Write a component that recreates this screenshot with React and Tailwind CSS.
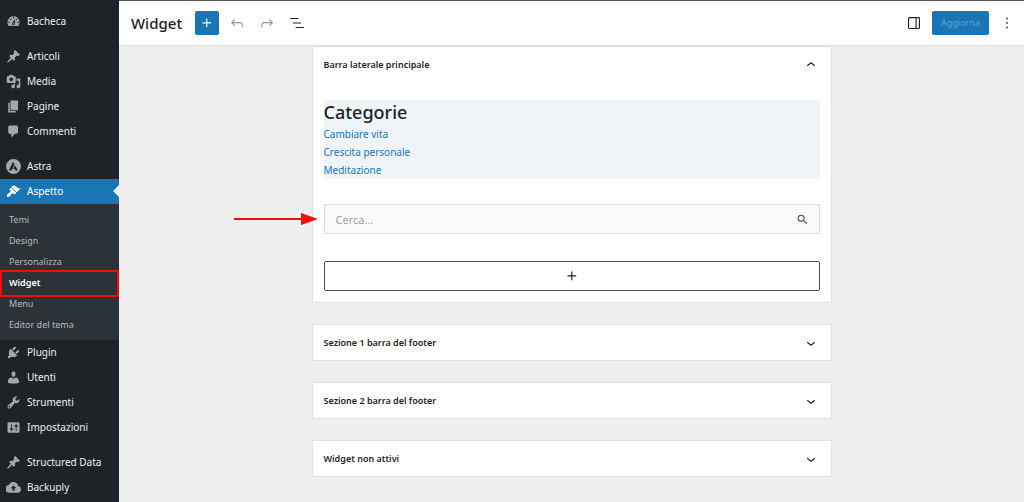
import React from 'react';

const ICONS = {
  dashboard:
    'M3.76 16h12.48A7.998 7.998 0 0 0 10 3a7.998 7.998 0 0 0-6.24 13zM10 4c.55 0 1 .45 1 1s-.45 1-1 1-1-.45-1-1 .45-1 1-1zM6 6c.55 0 1 .45 1 1s-.45 1-1 1-1-.45-1-1 .45-1 1-1zm8 0c.55 0 1 .45 1 1s-.45 1-1 1-1-.45-1-1 .45-1 1-1zm-5.37 5.55L12 7v6c0 1.1-.9 2-2 2s-2-.9-2-2c0-.57.24-1.08.63-1.45zM4 10c.55 0 1 .45 1 1s-.45 1-1 1-1-.45-1-1 .45-1 1-1zm12 0c.55 0 1 .45 1 1s-.45 1-1 1-1-.45-1-1 .45-1 1-1zm-5 3c0-.55-.45-1-1-1s-1 .45-1 1 .45 1 1 1 1-.45 1-1z',
  pin: 'M10.44 3.02l1.82-1.82 6.36 6.35-1.83 1.82c-1.05-.68-2.48-.57-3.41.36l-.75.75c-.92.93-1.04 2.35-.35 3.41l-1.83 1.82-2.41-2.41-2.8 2.79c-.42.42-3.38 2.71-3.8 2.29s1.86-3.39 2.28-3.81l2.79-2.79L4.1 9.36l1.83-1.82c1.05.69 2.48.57 3.4-.36l.75-.75c.93-.92 1.05-2.35.36-3.41z',
  media:
    'M13 11V4c0-.55-.45-1-1-1h-1.67L9 1H5L3.67 3H2c-.55 0-1 .45-1 1v7c0 .55.45 1 1 1h10c.55 0 1-.45 1-1zM7 4.5c1.38 0 2.5 1.12 2.5 2.5S8.38 9.5 7 9.5 4.5 8.38 4.5 7 5.62 4.5 7 4.5zM14 6h5v10.5c0 1.38-1.12 2.5-2.5 2.5S14 17.88 14 16.5s1.12-2.5 2.5-2.5c.17 0 .34.02.5.05V9h-3V6zm-4 8.05V13h2v3.5c0 1.38-1.12 2.5-2.5 2.5S7 17.88 7 16.5 8.12 14 9.5 14c.17 0 .34.02.5.05z',
  page: 'M6 15V2h10v13H6zm-1 1h8v2H3V5h2v11z',
  comment: 'M5 2h9c1.1 0 2 .9 2 2v7c0 1.1-.9 2-2 2h-2l-5 5v-5H5c-1.1 0-2-.9-2-2V4c0-1.1.9-2 2-2z',
  astra:
    'M10 0a10 10 0 1 0 0 20 10 10 0 0 0 0-20zM9.4 3.4l1.9 3.8-3.9 8.2H3.8zM11.9 8.4l3.9 7h-3.2l-.9-2H9.4z',
  brush:
    'M14.48 11.06L7.41 3.99l1.5-1.5c.5-.56 2.3-.47 3.51.32 1.21.8 1.43 1.28 2.91 2.1 1.18.64 2.45 1.26 4.45.85zm-.71.71L6.7 4.7 4.93 6.47c-.39.39-.39 1.02 0 1.41l1.06 1.06c.39.39.39 1.03 0 1.42-.6.6-1.43 1.11-2.21 1.69-.35.26-.7.53-1.01.84C1.43 14.23.4 16.08 1.4 17.07c.99 1 2.84-.03 4.18-1.36.31-.31.58-.66.85-1.02.57-.78 1.08-1.61 1.69-2.21.39-.39 1.02-.39 1.41 0l1.06 1.06c.39.39 1.02.39 1.41 0z',
  plugin:
    'M13.11 4.36L9.87 7.6 8 5.73l3.24-3.24c.35-.34 1.05-.2 1.56.32.52.51.66 1.21.31 1.55zm-8 1.77l.91-1.12 9.01 9.01-1.19.84c-.71.71-2.63 1.16-3.82 1.16H6.14L4.9 17.26c-.59.59-1.54.59-2.12 0-.59-.58-.59-1.53 0-2.12l1.24-1.24v-3.88c0-1.13.4-3.19 1.09-3.89zm7.26 3.97l3.24-3.24c.34-.35 1.04-.21 1.55.31.52.51.66 1.21.31 1.55l-3.24 3.25z',
  user: 'M10 9.25c-2.27 0-2.73-3.44-2.73-3.44C7 4.02 7.82 2 9.97 2c2.16 0 2.98 2.02 2.71 3.81 0 0-.41 3.44-2.68 3.44zm0 2.57L12.72 10c2.39 0 4.52 2.33 4.52 4.53v2.49s-3.65 1.13-7.24 1.13c-3.65 0-7.24-1.13-7.24-1.13v-2.49c0-2.25 1.94-4.48 4.47-4.48z',
  wrench:
    'M16.68 9.77c-1.34 1.34-3.3 1.67-4.95.99l-5.41 6.52c-.99.99-2.59.99-3.58 0s-.99-2.59 0-3.57l6.52-5.42c-.68-1.65-.35-3.61.99-4.95 1.28-1.28 3.12-1.62 4.72-1.06l-2.89 2.89 2.82 2.82 2.86-2.87c.53 1.58.18 3.39-1.08 4.65zM3.81 16.21c.4.39 1.04.39 1.43 0 .4-.4.4-1.04 0-1.43-.39-.4-1.03-.4-1.43 0-.39.39-.39 1.03 0 1.43z',
  settings:
    'M18 16V4c0-.55-.45-1-1-1H3c-.55 0-1 .45-1 1v12c0 .55.45 1 1 1h14c.55 0 1-.45 1-1zM8 11h1c.55 0 1 .45 1 1s-.45 1-1 1H8v1.5c0 .28-.22.5-.5.5s-.5-.22-.5-.5V13H6c-.55 0-1-.45-1-1s.45-1 1-1h1V5.5c0-.28.22-.5.5-.5s.5.22.5.5V11zm5-2h-1c-.55 0-1-.45-1-1s.45-1 1-1h1V5.5c0-.28.22-.5.5-.5s.5.22.5.5V7h1c.55 0 1 .45 1 1s-.45 1-1 1h-1v5.5c0 .28-.22.5-.5.5s-.5-.22-.5-.5V9z',
  cloud:
    'M16.2 7.9A6.5 6.5 0 0 0 3.9 6.6 5.2 5.2 0 0 0 4.8 17h11a4.6 4.6 0 0 0 .4-9.1zM11.4 11v3.4H8.6V11H6.2L10 7.2l3.8 3.8z',
};

const EDITOR_ICONS = {
  plus: 'M11 12.5V17.5H12.5V12.5H17.5V11H12.5V6H11V11H6V12.5H11Z',
  undo: 'M18.3 11.7c-.6-.6-1.4-.9-2.3-.9H6.7l2.9-3.3-1.1-1-4.5 5L8.5 16l1-1-2.7-2.7H16c.5 0 .9.2 1.3.5 1 1 1 3.4 1 4.5v.3h1.5v-.2c0-1.5 0-4.3-1.5-5.7z',
  redo: 'M15.6 6.5l-1.1 1 2.9 3.3H8c-.9 0-1.7.3-2.3.9-1.4 1.5-1.4 4.2-1.4 5.6v.2h1.5v-.3c0-1.1 0-3.5 1-4.5.3-.3.7-.5 1.3-.5h9.2L14.5 15l1.1 1.1 4.6-4.6-4.6-5z',
  list: 'M13.8 5.2H3v1.5h10.8V5.2zm-3.6 12v1.5H21v-1.5H10.2zm7.2-6H6.6v1.5h10.8v-1.5z',
  drawer:
    'M18 4H6c-1.1 0-2 .9-2 2v12c0 1.1.9 2 2 2h12c1.1 0 2-.9 2-2V6c0-1.1-.9-2-2-2zm-4 14.5H6c-.3 0-.5-.2-.5-.5V6c0-.3.2-.5.5-.5h8v13zm4.5-.5c0 .3-.2.5-.5.5h-2.5v-13H18c.3 0 .5.2.5.5v12z',
  more: 'M13 19h-2v-2h2v2zm0-6h-2v-2h2v2zm0-6h-2V5h2v2z',
  down: 'M17.5 11.6L12 16l-5.5-4.4.9-1.2L12 14l4.5-3.6 1 1.2z',
  up: 'M6.5 12.4L12 8l5.5 4.4-.9 1.2L12 10l-4.5 3.6-1-1.2z',
  search:
    'M15.5 14h-.79l-.28-.27A6.471 6.471 0 0 0 16 9.5 6.5 6.5 0 1 0 9.5 16c1.61 0 3.09-.59 4.23-1.57l.27.28v.79l5 4.99L20.49 19l-4.99-5zm-6 0C7.01 14 5 11.99 5 9.5S7.01 5 9.5 5 14 7.01 14 9.5 11.99 14 9.5 14z',
};

function MenuIcon({ name }) {
  return (
    <svg viewBox="0 0 20 20" className="size-[15px] shrink-0" fill="currentColor" fillRule="evenodd" aria-hidden="true">
      <path d={ICONS[name]} />
    </svg>
  );
}

function EditorIcon({ name, className = 'size-[18px]' }) {
  return (
    <svg viewBox="0 0 24 24" className={className} fill="currentColor" aria-hidden="true">
      <path d={EDITOR_ICONS[name]} />
    </svg>
  );
}

function MenuItem({ icon, label, active }) {
  return (
    <li>
      <a
        href="#"
        className={
          'relative flex h-[25px] items-center gap-[6px] pl-[6px] ' + (active ? 'bg-[#1a75b4] text-white' : 'text-[#f0f0f1]')
        }
      >
        <span className={active ? 'text-white' : 'text-[#a3a8ad]'}>
          <MenuIcon name={icon} />
        </span>
        {label}
        {active && (
          <svg viewBox="0 0 6 12" className="absolute right-0 top-[6px] h-3 w-[6px]" fill="#efefef" aria-hidden="true">
            <path d="M6 0v12L0 6z" />
          </svg>
        )}
      </a>
    </li>
  );
}

const SUBMENU = ['Temi', 'Design', 'Personalizza', 'Widget', 'Menu', 'Editor del tema'];

function Sidebar() {
  return (
    <nav aria-label="Menu principale" className="w-[119px] shrink-0 bg-[#1e2327] pt-[9px] text-[10px]">
      <ul className="flex flex-col gap-[10px]">
        <li>
          <ul>
            <MenuItem icon="dashboard" label="Bacheca" />
          </ul>
        </li>
        <li>
          <ul>
            <MenuItem icon="pin" label="Articoli" />
            <MenuItem icon="media" label="Media" />
            <MenuItem icon="page" label="Pagine" />
            <MenuItem icon="comment" label="Commenti" />
          </ul>
        </li>
        <li>
          <ul>
            <MenuItem icon="astra" label="Astra" />
            <MenuItem icon="brush" label="Aspetto" active />
            <li>
              <ul className="bg-[#2c3338] py-[5px] text-[9px] text-[#b4b9be]">
                {SUBMENU.map((label) => (
                  <li key={label} className="relative">
                    <a
                      href="#"
                      className={
                        'flex h-[21px] items-center pl-[9px] ' + (label === 'Widget' ? 'font-semibold text-white' : '')
                      }
                    >
                      {label}
                    </a>
                    {label === 'Widget' && (
                      <span className="pointer-events-none absolute inset-x-0 -bottom-1 -top-[2px] border-2 border-[#f80b0b]" />
                    )}
                  </li>
                ))}
              </ul>
            </li>
            <MenuItem icon="plugin" label="Plugin" />
            <MenuItem icon="user" label="Utenti" />
            <MenuItem icon="wrench" label="Strumenti" />
            <MenuItem icon="settings" label="Impostazioni" />
          </ul>
        </li>
        <li>
          <ul>
            <MenuItem icon="pin" label="Structured Data" />
            <MenuItem icon="cloud" label="Backuply" />
          </ul>
        </li>
      </ul>
    </nav>
  );
}

function Header() {
  return (
    <header className="flex h-[46px] items-center border-t border-b border-t-[#55555a] border-b-[#dedede] bg-white pl-3 pr-[5px]">
      <h1 className="text-[15px] font-medium">Widget</h1>
      <div className="ml-[13px] flex items-center gap-[6px]">
        <button type="button" aria-label="Aggiungi blocco" className="flex size-6 items-center justify-center rounded-[2px] bg-[#1a75b4] text-white">
          <EditorIcon name="plus" />
        </button>
        <button type="button" aria-label="Annulla" className="flex size-6 items-center justify-center text-[#949494]">
          <EditorIcon name="undo" />
        </button>
        <button type="button" aria-label="Ripeti" className="flex size-6 items-center justify-center text-[#949494]">
          <EditorIcon name="redo" />
        </button>
        <button type="button" aria-label="Vista elenco" className="flex size-6 items-center justify-center">
          <EditorIcon name="list" />
        </button>
      </div>
      <div className="ml-auto flex items-center gap-[6px]">
        <button type="button" aria-label="Impostazioni" className="flex size-6 items-center justify-center">
          <EditorIcon name="drawer" />
        </button>
        <button type="button" className="h-6 w-[57px] rounded-[2px] bg-[#1a75b4] text-center text-[9px] text-[#5fa3d4]">
          Aggiorna
        </button>
        <button type="button" aria-label="Opzioni" className="flex w-6 items-center justify-center">
          <EditorIcon name="more" />
        </button>
      </div>
    </header>
  );
}

function PanelTitle({ title, open }) {
  return (
    <h2>
      <button
        type="button"
        aria-expanded={Boolean(open)}
        className="flex h-[35px] w-full items-center justify-between px-[11px] text-left text-[9px] font-semibold"
      >
        {title}
        <EditorIcon name={open ? 'up' : 'down'} />
      </button>
    </h2>
  );
}

function Panel({ title, open, children }) {
  return (
    <section className="border border-[#e2e2e2] bg-white">
      <PanelTitle title={title} open={open} />
      {children}
    </section>
  );
}

export default function App() {
  return (
    <div className="flex min-h-screen bg-[#efefef] font-['Noto_Sans','Open_Sans',sans-serif] text-[#1e1e1e]">
      <Sidebar />
      <div className="flex min-w-0 flex-1 flex-col">
        <Header />
        <main className="mx-auto flex w-full max-w-[520px] flex-col gap-[21px] pb-6">
          <Panel title="Barra laterale principale" open>
            <div className="flex flex-col px-[11px] pb-[11px] pt-[18px]">
              <div className="bg-[#eef4f8]">
                <h3 className="text-[18px] font-medium leading-[25px]">Categorie</h3>
                <ul className="text-[10px] leading-[18px] text-[#1a75b4]">
                  <li><a href="#">Cambiare vita</a></li>
                  <li><a href="#">Crescita personale</a></li>
                  <li><a href="#">Meditazione</a></li>
                </ul>
              </div>
              <form className="relative mt-[25px] flex h-[30px] items-center border border-[#dddddd] bg-[#fafafa]">
                <input
                  type="search"
                  aria-label="Cerca"
                  placeholder="Cerca..."
                  className="h-full min-w-0 flex-1 bg-transparent pl-[11px] text-[11px] outline-none placeholder:text-[#9aa0a6]"
                />
                <button type="button" aria-label="Cerca" className="flex w-8 justify-center text-[#3a4a5e]">
                  <EditorIcon name="search" className="size-[13px]" />
                </button>
                <svg viewBox="0 0 84 12" className="absolute -left-[91px] top-2 h-3 w-[84px]" fill="#f80b0b" aria-hidden="true">
                  <path d="M0 5h67V0l17 6-17 6V7H0z" />
                </svg>
              </form>
              <button
                type="button"
                aria-label="Aggiungi blocco"
                className="mt-[27px] flex h-[30px] items-center justify-center rounded-[2px] border border-[#4a4f55]"
              >
                <EditorIcon name="plus" />
              </button>
            </div>
          </Panel>
          <Panel title="Sezione 1 barra del footer" />
          <Panel title="Sezione 2 barra del footer" />
          <Panel title="Widget non attivi" />
        </main>
      </div>
    </div>
  );
}
